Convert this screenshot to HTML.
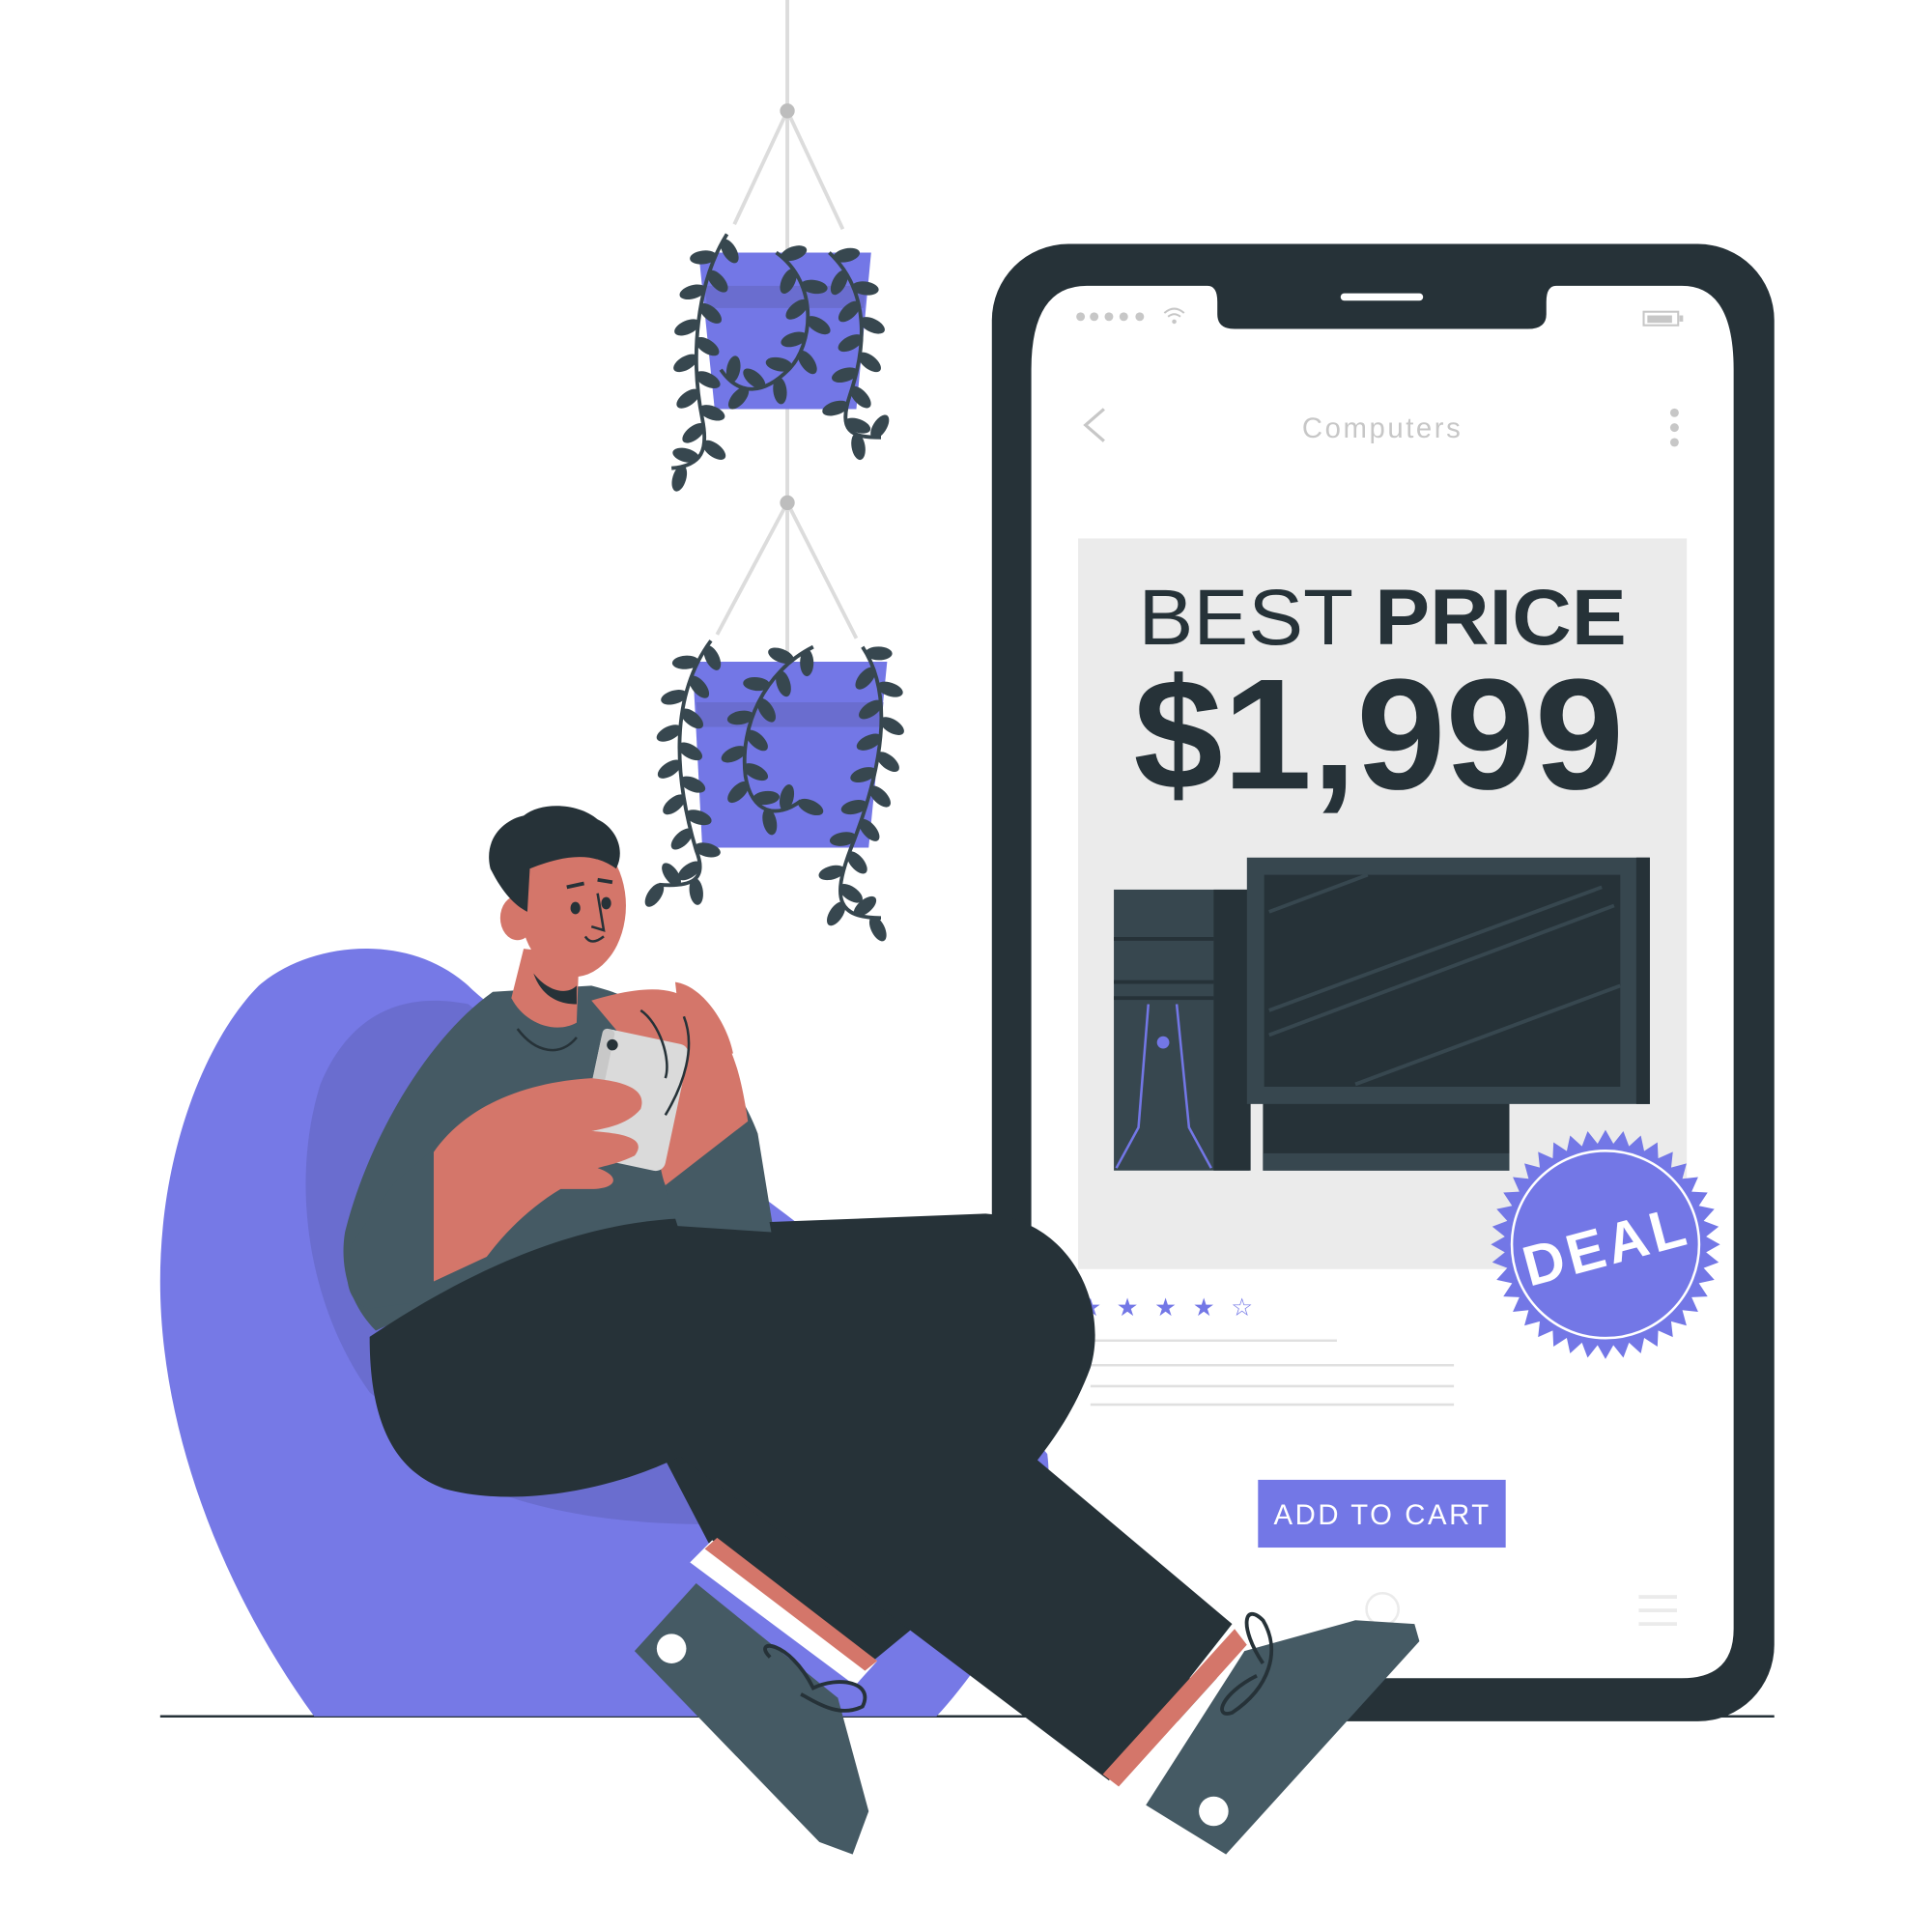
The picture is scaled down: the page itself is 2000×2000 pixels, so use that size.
<!DOCTYPE html>
<html><head><meta charset="utf-8"><style>
html,body{margin:0;padding:0;background:#fff;width:2000px;height:2000px;overflow:hidden}
svg{display:block}
</style></head><body>
<svg id="s" width="2000" height="2000" viewBox="0 0 1568 1568" xmlns="http://www.w3.org/2000/svg">
<g stroke="#dcdcdc" stroke-width="3" fill="none">
<line x1="639" y1="0" x2="639" y2="540"/>
<path d="M596 182 L639 90 L684 186"/>
<path d="M582 515 L639 408 L695 518"/>
</g>
<circle cx="639" cy="90" r="6" fill="#bdbdbd"/>
<circle cx="639" cy="408" r="6" fill="#bdbdbd"/>
<polygon points="567,205 707,205 695,332 580,332" fill="#7377e6"/>
<polygon points="572,232 703,232 701,250 574,250" fill="#6a6dcf"/>
<polygon points="562,537 720,537 705,688 570,688" fill="#7377e6"/>
<polygon points="565,570 717,570 715,590 567,590" fill="#6a6dcf"/>
<g id="vines" fill="none" stroke="#37474f" stroke-width="3">
<path d="M590 190 C565 230 560 290 570 340 C575 365 570 378 545 380"/>
<path d="M630 205 C665 230 660 280 640 300 C620 320 600 322 585 300"/>
<path d="M673 205 C710 240 700 290 690 320 C680 350 690 355 715 355"/>
<path d="M577 520 C540 570 550 640 565 690 C575 715 560 720 535 718"/>
<path d="M660 525 C620 545 600 590 605 630 C610 660 630 665 650 650"/>
<path d="M700 525 C730 570 710 640 690 690 C675 730 680 745 715 745"/>
</g>
<g id="leaves" fill="#37474f"></g>

<line x1="130" y1="1393" x2="1440" y2="1393" stroke="#263238" stroke-width="2"/>

<rect x="805" y="198" width="635" height="1199" rx="62" fill="#263238"/>
<path d="M882 232 H980 Q988 232 988 245 V255 Q988 267 1002 267 H1240 Q1255 267 1255 255 V245 Q1255 232 1263 232 H1365 Q1407 232 1407 300 V1322 Q1407 1362 1365 1362 H880 Q837 1362 837 1322 V300 Q837 232 882 232Z" fill="#fff"/>
<rect x="1088" y="238" width="67" height="6" rx="3" fill="#fff"/>
<g fill="#c7c7c7"><circle cx="877" cy="257" r="3.5"/><circle cx="888" cy="257" r="3.5"/><circle cx="900" cy="257" r="3.5"/><circle cx="912" cy="257" r="3.5"/><circle cx="925" cy="257" r="3.5"/>
<circle cx="1359" cy="335" r="3.5"/><circle cx="1359" cy="347" r="3.5"/><circle cx="1359" cy="359" r="3.5"/></g>
<g stroke="#c7c7c7" fill="none" stroke-width="1.6"><path d="M945 254 Q953 247 961 254"/><path d="M948 257 Q953 253 958 257"/><circle cx="953" cy="261" r="1" fill="#c7c7c7"/>
<rect x="1334" y="253" width="28" height="11"/></g>
<rect x="1337" y="256" width="20" height="6" fill="#c7c7c7"/><rect x="1363" y="256" width="3" height="5" fill="#c7c7c7"/>
<path d="M896 332 L881 345 L896 358" stroke="#c7c7c7" stroke-width="2.5" fill="none"/>
<text x="1122" y="355" text-anchor="middle" font-family="Liberation Sans, sans-serif" font-size="23" letter-spacing="2" fill="#c7c7c7">Computers</text>
<rect x="875" y="437" width="494" height="593" fill="#ebebeb"/>
<text x="924" y="523" font-family="Liberation Sans, sans-serif" font-size="64" fill="#263238" textLength="396" lengthAdjust="spacingAndGlyphs"><tspan font-weight="300">BEST </tspan><tspan font-weight="bold">PRICE</tspan></text>
<text x="920" y="640" font-family="Liberation Sans, sans-serif" font-weight="bold" font-size="128" fill="#263238" textLength="398" lengthAdjust="spacingAndGlyphs">$1,999</text>
<rect x="904" y="722" width="110" height="228" fill="#37474f"/>
<rect x="985" y="722" width="30" height="228" fill="#263238"/>
<line x1="904" y1="762" x2="985" y2="762" stroke="#263238" stroke-width="3"/>
<line x1="904" y1="797" x2="985" y2="797" stroke="#263238" stroke-width="3"/>
<line x1="904" y1="810" x2="985" y2="810" stroke="#263238" stroke-width="3"/>
<path d="M906 948 L924 915 L932 815 M983 948 L965 915 L955 815" stroke="#7377e6" stroke-width="2" fill="none"/>
<circle cx="944" cy="846" r="5" fill="#7377e6"/>
<rect x="1025" y="890" width="200" height="60" fill="#263238"/>
<rect x="1012" y="696" width="327" height="200" fill="#37474f"/>
<rect x="1328" y="696" width="11" height="200" fill="#263238"/>
<rect x="1026" y="710" width="289" height="172" fill="#263238"/>
<g stroke="#37474f" stroke-width="3"><line x1="1030" y1="740" x2="1110" y2="710"/><line x1="1030" y1="820" x2="1300" y2="720"/><line x1="1030" y1="840" x2="1310" y2="735"/><line x1="1100" y1="880" x2="1315" y2="800"/></g>
<rect x="1025" y="936" width="200" height="14" fill="#37474f"/>
<polygon id="star" fill="#7377e6"/>
<circle cx="1303" cy="1010" r="76" fill="none" stroke="#fff" stroke-width="2"/>
<text x="1303" y="1027" text-anchor="middle" transform="rotate(-15 1303 1010)" font-family="Liberation Sans, sans-serif" font-weight="bold" font-size="46" fill="#fff" letter-spacing="3">DEAL</text>
<g fill="#7377e6" font-family="DejaVu Sans, sans-serif" font-size="20" text-anchor="middle">
<text x="885" y="1068">★</text><text x="915" y="1068">★</text><text x="946" y="1068">★</text><text x="977" y="1068">★</text><text x="1008" y="1068">☆</text></g>
<g stroke="#e0e0e0" stroke-width="2"><line x1="885" y1="1088" x2="1085" y2="1088"/><line x1="885" y1="1108" x2="1180" y2="1108"/><line x1="885" y1="1125" x2="1180" y2="1125"/><line x1="885" y1="1140" x2="1180" y2="1140"/></g>
<rect x="1021" y="1201" width="201" height="55" fill="#7377e6"/>
<text x="1122" y="1237" text-anchor="middle" font-family="Liberation Sans, sans-serif" font-size="23" letter-spacing="2" fill="#fff">ADD TO CART</text>
<circle cx="1122" cy="1306" r="13" fill="none" stroke="#ebebeb" stroke-width="2"/>
<g stroke="#ebebeb" stroke-width="3"><line x1="1330" y1="1296" x2="1361" y2="1296"/><line x1="1330" y1="1307" x2="1361" y2="1307"/><line x1="1330" y1="1318" x2="1361" y2="1318"/></g>

<path d="M255 1393 C180 1290 130 1160 130 1040 C130 930 170 840 210 800 C250 765 330 755 380 800 C430 850 700 1000 850 1180 C860 1260 800 1350 760 1393Z" fill="#7679e6"/>
<path d="M300 1130 C250 1060 235 960 260 880 C285 820 330 805 380 815 L620 1000 L820 1180 C700 1250 500 1250 400 1210Z" fill="#6a6dcf"/>

<path d="M450 1100 L745 1318 L700 1355 L575 1252 L540 1185Z" fill="#263238"/>
<path d="M560 1268 L578 1250 L712 1348 L694 1368Z" fill="#fff"/>
<path d="M572 1257 L582 1248 L712 1348 L702 1356Z" fill="#d4766a"/>
<path d="M515 1340 L565 1285 L680 1378 L705 1470 L692 1505 L665 1495Z" fill="#455a64"/>
<circle cx="545" cy="1338" r="12" fill="#fff"/>
<path d="M625 1345 C610 1330 640 1330 660 1370 C680 1360 710 1365 700 1385 C680 1395 660 1380 650 1375" stroke="#263238" stroke-width="3" fill="none"/>
<path d="M400 805 L480 800 C560 820 600 880 615 920 L628 1000 L540 990 C450 1010 370 1050 305 1080 C285 1060 275 1030 280 1000 C300 920 350 840 400 805Z" fill="#455a64"/>
<path d="M285 1010 C275 1050 290 1060 300 1062 L352 1055 L355 930 L320 960Z" fill="#455a64"/>
<path d="M300 1085 C420 1005 520 978 620 992 L800 985 C870 990 900 1060 885 1110 C872 1145 855 1168 842 1185 L1000 1318 L900 1445 L552 1182 C500 1208 420 1225 360 1208 C310 1190 300 1135 300 1085Z" fill="#263238"/>
<path d="M895 1440 L1002 1322 L1012 1335 L908 1450Z" fill="#d4766a"/>
<path d="M908 1450 L1012 1335 L1030 1348 L925 1465Z" fill="#fff"/>
<path d="M930 1465 L1010 1340 L1100 1315 L1148 1318 L1152 1332 L995 1505Z" fill="#455a64"/>
<circle cx="985" cy="1470" r="12" fill="#fff"/>
<path d="M1025 1350 C1005 1320 1010 1300 1025 1315 C1040 1340 1030 1370 1000 1390 C985 1395 990 1375 1020 1360" stroke="#263238" stroke-width="3" fill="none"/>
<path d="M538 958 L610 912 L626 1000 L550 995Z" fill="#455a64"/>
<path d="M480 812 C520 800 545 800 560 812 C590 832 600 862 607 910 L540 962 C528 930 540 880 522 862Z" fill="#d4766a"/>
<path d="M548 797 C570 800 590 830 595 855 L555 860 Z" fill="#d4766a"/>
<g transform="rotate(12 512 893)"><rect x="478" y="840" width="72" height="105" rx="8" fill="#dadada"/><rect x="478" y="840" width="10" height="105" rx="4" fill="#c8c8c8"/></g>
<circle cx="497" cy="848" r="4.5" fill="#263238"/>
<path d="M352 935 C380 895 430 878 480 875 C510 878 525 885 520 900 C510 912 495 915 480 918 C510 920 525 925 515 938 C500 945 495 945 485 948 C505 955 500 965 480 965 L455 965 C430 980 410 1000 395 1020 L352 1040Z" fill="#d4766a"/>
<path d="M540 875 C545 860 535 830 520 820 M540 905 C555 880 565 850 555 825" stroke="#263238" stroke-width="2" fill="none"/>
<path d="M425 770 L470 775 L468 830 C450 840 425 830 415 810Z" fill="#d4766a"/>
<path d="M433 790 C445 805 460 808 468 800 L468 815 C455 815 440 810 433 790Z" fill="#263238"/>
<path d="M420 835 C435 855 455 858 468 842" stroke="#263238" stroke-width="2" fill="none"/>
<ellipse cx="465" cy="735" rx="43" ry="58" fill="#d4766a"/>
<ellipse cx="420" cy="745" rx="14" ry="18" fill="#d4766a"/>
<path d="M398 705 C392 680 410 665 425 662 C440 650 470 652 485 665 C500 672 508 690 500 705 C480 690 455 695 430 705 L428 740 C418 735 408 725 398 705Z" fill="#263238"/>
<ellipse cx="467" cy="737" rx="4" ry="5" fill="#263238"/><ellipse cx="492" cy="733" rx="4" ry="5" fill="#263238"/>
<path d="M460 720 L474 717 M485 714 L497 716" stroke="#263238" stroke-width="3"/>
<path d="M485 725 L490 755 L480 752 M475 760 Q480 768 490 760" stroke="#263238" stroke-width="2" fill="none"/>
</svg>
<script>
(function(){
var ns="http://www.w3.org/2000/svg";
var g=document.getElementById('leaves');
document.querySelectorAll('#vines path').forEach(function(p,vi){
 var L=p.getTotalLength();
 for(var d=6,i=0;d<L;d+=14,i++){
  var a=p.getPointAtLength(d),b=p.getPointAtLength(Math.min(L,d+1));
  var ang=Math.atan2(b.y-a.y,b.x-a.x)*180/Math.PI+(i%2?60:-60);
  var e=document.createElementNS(ns,'ellipse');
  var r=ang*Math.PI/180;
  e.setAttribute('cx',a.x+Math.cos(r)*10);e.setAttribute('cy',a.y+Math.sin(r)*10);
  e.setAttribute('rx',11);e.setAttribute('ry',5.5);
  e.setAttribute('transform','rotate('+ang+' '+(a.x+Math.cos(r)*10)+' '+(a.y+Math.sin(r)*10)+')');
  g.appendChild(e);
 }
});
var pts=[],cx=1303,cy=1010,n=40;
for(var k=0;k<n*2;k++){var rr=k%2?82:93,t=k*Math.PI/n;pts.push((cx+rr*Math.cos(t)).toFixed(1)+','+(cy+rr*Math.sin(t)).toFixed(1));}
document.getElementById('star').setAttribute('points',pts.join(' '));
})();
</script>
</body></html>
